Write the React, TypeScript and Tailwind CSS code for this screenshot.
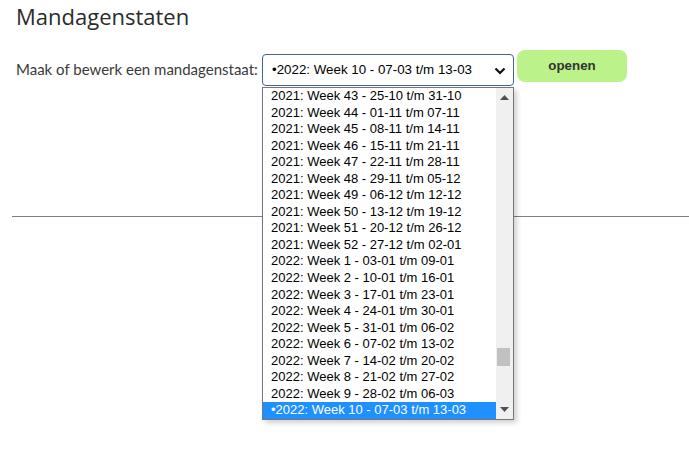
const weeks = [
  "2021: Week 43 - 25-10 t/m 31-10",
  "2021: Week 44 - 01-11 t/m 07-11",
  "2021: Week 45 - 08-11 t/m 14-11",
  "2021: Week 46 - 15-11 t/m 21-11",
  "2021: Week 47 - 22-11 t/m 28-11",
  "2021: Week 48 - 29-11 t/m 05-12",
  "2021: Week 49 - 06-12 t/m 12-12",
  "2021: Week 50 - 13-12 t/m 19-12",
  "2021: Week 51 - 20-12 t/m 26-12",
  "2021: Week 52 - 27-12 t/m 02-01",
  "2022: Week 1 - 03-01 t/m 09-01",
  "2022: Week 2 - 10-01 t/m 16-01",
  "2022: Week 3 - 17-01 t/m 23-01",
  "2022: Week 4 - 24-01 t/m 30-01",
  "2022: Week 5 - 31-01 t/m 06-02",
  "2022: Week 6 - 07-02 t/m 13-02",
  "2022: Week 7 - 14-02 t/m 20-02",
  "2022: Week 8 - 21-02 t/m 27-02",
  "2022: Week 9 - 28-02 t/m 06-03",
  "•2022: Week 10 - 07-03 t/m 13-03",
];

const selected = weeks.length - 1;

export default function App() {
  return (
    <div className="relative w-[689px] h-[457px] overflow-hidden bg-white text-[#333]">
      <h1 className="pl-[16px] text-[22px] leading-[33px] font-normal text-[#2b2b2b] font-['Open_Sans',sans-serif]">
        Mandagenstaten
      </h1>

      <div className="mt-[17px] flex items-start pl-[16px]">
        <label className="mt-[9px] w-[241px] whitespace-nowrap text-[15px] leading-[20px] text-[#3a3a3a] font-['Lato',sans-serif]">
          Maak of bewerk een mandagenstaat:
        </label>

        <div className="relative ml-[5px] mt-[4px] w-[252px]">
          <div className="flex h-[32px] items-center justify-between rounded-[4px] border border-[#43668f] bg-white pl-[9px] pr-[7px] font-['Liberation_Sans',Arial,sans-serif] text-[13.33px] text-black">
            <span>{weeks[selected]}</span>
            <svg width="12" height="8" viewBox="0 0 12 8" className="mt-[2px]">
              <path d="M1.5 1.5 L6 6 L10.5 1.5" fill="none" stroke="#111" strokeWidth="2.2" />
            </svg>
          </div>

          {/* open list */}
          <div className="absolute left-0 top-[33px] z-10 flex h-[333px] w-[252px] border border-[#767676] bg-white shadow-[3px_3px_5px_rgba(0,0,0,0.18)] font-['Liberation_Sans',Arial,sans-serif] text-[13px] text-black">
            <ul className="flex-1">
              {weeks.map((w, i) => (
                <li
                  key={w}
                  className={
                    i === selected
                      ? "h-[16.55px] leading-[16.55px] pl-[8px] whitespace-nowrap bg-[#1e90ff] text-white"
                      : "h-[16.55px] leading-[16.55px] pl-[8px] whitespace-nowrap"
                  }
                >
                  {w}
                </li>
              ))}
            </ul>
            <div className="relative w-[17px] bg-[#f0f0f0]">
              <svg width="9" height="5" viewBox="0 0 9 5" className="absolute left-[4px] top-[7px]">
                <path d="M0 5 L4.5 0 L9 5 Z" fill="#505050" />
              </svg>
              <div className="absolute left-[1px] top-[260px] h-[18px] w-[13px] bg-[#c1c1c1]" />
              <svg width="9" height="5" viewBox="0 0 9 5" className="absolute bottom-[7px] left-[4px]">
                <path d="M0 0 L4.5 5 L9 0 Z" fill="#505050" />
              </svg>
            </div>
          </div>
        </div>

        <button className="ml-[3px] h-[32px] w-[110px] rounded-[8px] bg-[#bcf28a] font-['Liberation_Sans',Arial,sans-serif] text-[13.33px] font-bold text-[#333]">
          openen
        </button>
      </div>

      <hr className="ml-[12px] mt-[130px] border-0 border-t border-[#808080]" />
    </div>
  );
}
